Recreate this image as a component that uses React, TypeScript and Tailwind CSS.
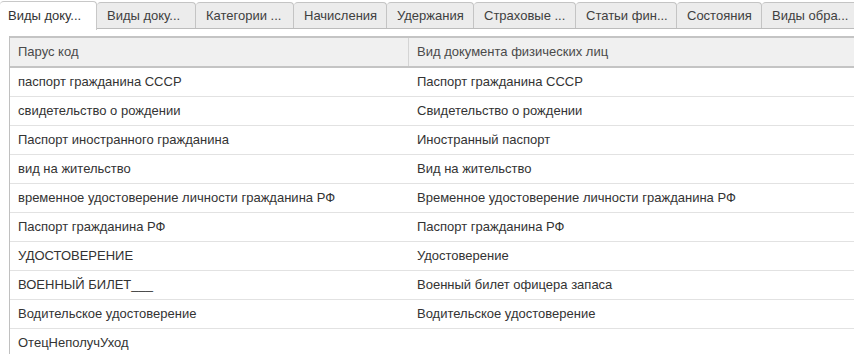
import React from 'react'

const tabs = [
    { label: 'Виды доку...', w: 97, active: true },
    { label: 'Виды доку...', w: 99 },
    { label: 'Категории ...', w: 98 },
    { label: 'Начисления', w: 93 },
    { label: 'Удержания', w: 87 },
    { label: 'Страховые ...', w: 102 },
    { label: 'Статьи фин...', w: 101 },
    { label: 'Состояния', w: 85 },
    { label: 'Виды обра...', w: 100 },
]

const rows = [
    ['паспорт гражданина СССР', 'Паспорт гражданина СССР'],
    ['свидетельство о рождении', 'Свидетельство о рождении'],
    ['Паспорт иностранного гражданина', 'Иностранный паспорт'],
    ['вид на жительство', 'Вид на жительство'],
    ['временное удостоверение личности гражданина РФ', 'Временное удостоверение личности гражданина РФ'],
    ['Паспорт гражданина РФ', 'Паспорт гражданина РФ'],
    ['УДОСТОВЕРЕНИЕ', 'Удостоверение'],
    ['ВОЕННЫЙ БИЛЕТ___', 'Военный билет офицера запаса'],
    ['Водительское удостоверение', 'Водительское удостоверение'],
    ['ОтецНеполучУход', ''],
]

export default function App() {
    return (
        <div
            className="w-[854px] h-[354px] overflow-hidden bg-white text-[13px] text-[#333333]"
            style={{ fontFamily: '"Liberation Sans", Arial, sans-serif' }}
        >
            {/* Tabs */}
            <div className="flex h-[29px] border-b border-[#bcbcbc] whitespace-nowrap">
                {tabs.map((t, i) => (
                    <div
                        key={i}
                        style={{ width: t.w }}
                        className={
                            t.active
                                ? 'shrink-0 h-[29px] mt-px flex items-center pl-2 bg-white border-t border-r border-[#c8c8c8] rounded-t-[4px] text-[#333333] relative z-10 -mb-px'
                                : 'shrink-0 h-[26px] mt-[2px] flex items-center pl-[10px] bg-[#ececec] border-t border-r border-[#c4c4c4] rounded-t-[4px] text-[#404040]'
                        }
                    >
                        {t.label}
                    </div>
                ))}
            </div>

            {/* Table */}
            <div className="ml-[9px] mt-[7px] border-l border-[#c0c0c0]">
                <div className="flex h-[32px] bg-[#f0f0f0] border-t-2 border-b-2 border-[#c4c4c4] text-[#4a4a4a]">
                    <div className="w-[399px] shrink-0 flex items-center pl-2 border-r border-[#d4d4d4]">Парус код</div>
                    <div className="flex-1 flex items-center pl-2">Вид документа физических лиц</div>
                </div>
                {rows.map((r, i) => (
                    <div key={i} className="flex h-[29px] border-b border-[#e2e2e2]">
                        <div className="w-[399px] shrink-0 flex items-center pl-2">{r[0]}</div>
                        <div className="flex-1 flex items-center pl-2">{r[1]}</div>
                    </div>
                ))}
            </div>
        </div>
    )
}
